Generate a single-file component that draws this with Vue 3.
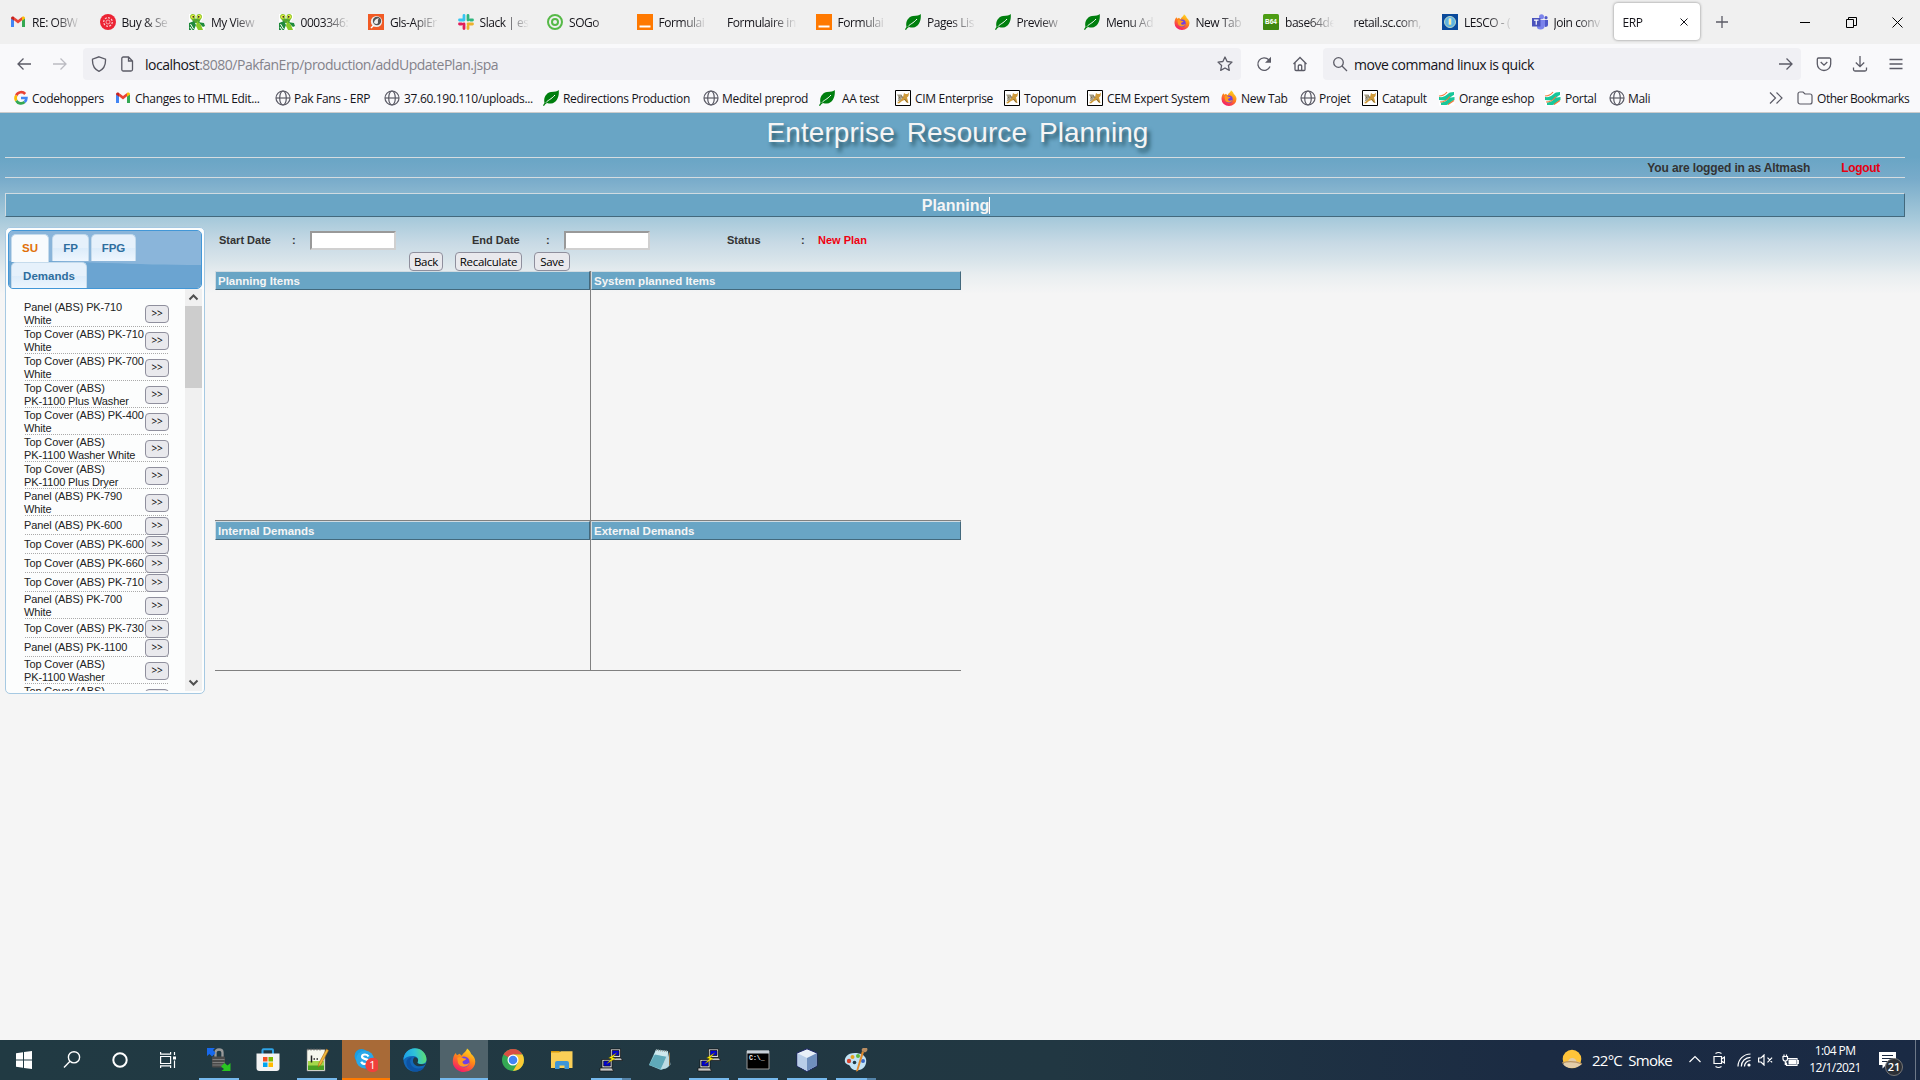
<template>
  <div class="screen">
    <!-- browser tabs -->
    <div class="tabstrip">
      <div v-for="(t, i) in tabs" :key="i" class="tab" :class="{ active: t.active }">
        <svg v-if="t.icon" class="fav" viewBox="0 0 16 16" v-html="icons[t.icon]"></svg>
        <span class="tab-label">{{ t.text }}</span>
        <svg v-if="t.active" class="tab-close" viewBox="0 0 8 8"><path d="M.5 .5l7 7M7.5 .5l-7 7" stroke="#15141a" /></svg>
      </div>
      <svg class="plus" viewBox="0 0 12 12"><path d="M6 0v12M0 6h12" stroke="#5b5b66" stroke-width="1.3" /></svg>
      <div class="win-controls">
        <svg viewBox="0 0 11 11"><path d="M0 5.5h10" stroke="#000" /></svg>
        <svg viewBox="0 0 11 11"><path d="M.5 2.5h7v8h-7zM2.500 2.500v-2h8v8h-3" fill="none" stroke="#000" /></svg>
        <svg viewBox="0 0 11 11"><path d="M.5 .5l10 10M10.500 .5l-10 10" stroke="#000" /></svg>
      </div>
    </div>

    <!-- address bar -->
    <div class="navbar">
      <svg class="ni back" viewBox="0 0 16 16"><path d="M15 8H2M7.500 2.500L2 8l5.500 5.500" /></svg>
      <svg class="ni forward" viewBox="0 0 16 16"><path d="M1 8h13M8.500 2.500L14 8l-5.500 5.500" /></svg>
      <div class="urlbar">
        <svg class="ni" viewBox="0 0 16 16"><path d="M8 .8L14.500 3.200C14.800 8.500 13 13 8 15.300C3 13 1.200 8.500 1.500 3.200Z" /></svg>
        <svg class="ni page-ico" viewBox="0 0 16 16"><path d="M2.800 2.500a1.500 1.500 0 0 1 1.500-1.500H9.500L13.500 5v8.500a1.500 1.500 0 0 1-1.500 1.500H4.300a1.500 1.500 0 0 1-1.500-1.500ZM9.500 1v4h4" /></svg>
        <span class="url"><b>localhost</b>:8080/PakfanErp/production/addUpdatePlan.jspa</span>
        <svg class="ni star" viewBox="0 0 16 16"><path d="M8 1l2.100 4.500 4.900.6-3.600 3.400.9 4.900L8 12l-4.300 2.400.9-4.900L1 6.100l4.900-.6z" stroke-linejoin="round" /></svg>
      </div>
      <svg class="ni reload" viewBox="0 0 16 16"><path d="M14 10.500A6.300 6.300 0 1 1 12.800 3.800" /><path d="M15 .8v6H9z" fill="#5b5b66" stroke="none" /></svg>
      <svg class="ni home" viewBox="0 0 16 16"><path d="M1.500 8L8 1.500 14.500 8M3 6.700V13.500a1 1 0 0 0 1 1h8a1 1 0 0 0 1-1V6.700M6.300 14.500V10a1 1 0 0 1 1-1h1.400a1 1 0 0 1 1 1v4.500" /></svg>
      <div class="searchbar">
        <svg class="ni" viewBox="0 0 16 16"><circle cx="6.500" cy="6.500" r="4.800" /><path d="M10 10l5 5" /></svg>
        <span class="query">move command linux is quick</span>
        <svg class="ni go" viewBox="0 0 16 16"><path d="M1 8h13M8.500 2.500L14 8l-5.500 5.500" /></svg>
      </div>
      <svg class="ni pocket" viewBox="0 0 16 16"><path d="M2.500 2h11a1.200 1.200 0 0 1 1.200 1.200V8A6.700 6.500 0 0 1 1.300 8V3.200A1.200 1.200 0 0 1 2.500 2ZM4.700 6L8 9.200 11.300 6" /></svg>
      <svg class="ni download" viewBox="0 0 16 16"><path d="M8 0v10.500M3.800 6.500L8 10.700l4.200-4.200M1.500 11.500V13.500a1.500 1.500 0 0 0 1.500 1.500h10a1.500 1.500 0 0 0 1.500-1.500v-2" /></svg>
      <svg class="ni menu" viewBox="0 0 16 16"><path d="M1.500 3.500h13M1.500 8h13M1.500 12.500h13" /></svg>
    </div>

    <!-- bookmarks, each one is as wide as the distance to the next -->
    <div class="bookmarks">
      <div v-for="(b, i) in bookmarks" :key="i" class="bookmark" :style="{ width: b.w + 'px' }">
        <svg class="fav" viewBox="0 0 16 16" v-html="icons[b.icon]"></svg>
        <span :style="{ marginLeft: (b.gap || 4) + 'px' }">{{ b.text }}</span>
      </div>
      <svg class="more" viewBox="0 0 14 14"><path d="M1 1.500L6.500 7 1 12.500M7.500 1.500L13 7 7.500 12.500" fill="none" stroke="#5b5b66" stroke-width="1.200" /></svg>
      <svg class="fav folder" viewBox="0 0 16 16"><path d="M1 4a2 2 0 0 1 2-2h3l2 2h5a2 2 0 0 1 2 2v6a2 2 0 0 1-2 2H3a2 2 0 0 1-2-2Z" fill="none" stroke="#5b5b66" stroke-width="1.200" /></svg>
      <span class="other">Other Bookmarks</span>
    </div>

    <!-- ERP page -->
    <div class="page">
      <h1>Enterprise Resource Planning</h1>
      <div class="userbar">
        <span>You are logged in as Altmash</span>
        <a class="logout">Logout</a>
      </div>
      <div class="titlebar"><span>Planning</span></div>

      <div class="content">
        <div class="side">
          <div class="side-tabs">
            <svg class="gloss" viewBox="0 0 192 57" preserveAspectRatio="none">
              <rect width="192" height="57" fill="#6ba4d1" />
              <path d="M0 0H192V34C120 34 80 30 0 30Z" fill="#8ab5da" />
            </svg>
            <a v-for="t in sideTabs" :key="t.text" class="side-tab" :class="{ on: t.on }" :style="{ width: t.w + 'px' }">{{ t.text }}</a>
          </div>
          <div class="side-body">
            <div class="items">
              <div v-for="(item, i) in items" :key="i" class="item" :class="{ tall: item.length > 1 }">
                <div class="item-name">
                  <div v-for="line in item" :key="line">{{ line }}</div>
                </div>
                <button class="btn">&gt;&gt;</button>
              </div>
            </div>
            <div class="scrollbar">
              <svg viewBox="0 0 17 17"><path d="M4.500 10.500l4-4 4 4" /></svg>
              <div class="thumb"></div>
              <svg class="down" viewBox="0 0 17 17"><path d="M4.500 6.500l4 4 4-4" /></svg>
            </div>
          </div>
        </div>

        <div class="plan">
          <div class="form-row">
            <label>Start Date</label><i>:</i><input type="text" />
            <label class="end">End Date</label><i>:</i><input type="text" />
            <label class="status">Status</label><i>:</i><em>New Plan</em>
          </div>
          <div class="buttons">
            <button class="btn back-btn">Back</button>
            <button class="btn recalc-btn">Recalculate</button>
            <button class="btn save-btn">Save</button>
          </div>
          <div class="grid top">
            <div class="cell"><div class="head">Planning Items</div></div>
            <div class="cell"><div class="head">System planned Items</div></div>
          </div>
          <div class="grid bottom">
            <div class="cell"><div class="head">Internal Demands</div></div>
            <div class="cell"><div class="head">External Demands</div></div>
          </div>
        </div>
      </div>
    </div>

    <!-- windows taskbar -->
    <div class="taskbar">
      <div v-for="(a, i) in apps" :key="i" class="app" :class="[a.state, { open: a.open, multi: a.multi }]" :style="{ width: (a.w || 49) + 'px' }">
        <svg viewBox="0 0 24 24" v-html="icons[a.icon]"></svg>
      </div>
      <div class="tray">
        <svg class="weather" viewBox="0 0 22 22">
          <circle cx="11" cy="10" r="9.300" fill="#ffc43a" />
          <path d="M2 15q2-3 5-2.500 1-4 5-3.500 3 .5 3.500 3.500 4 0 5 3-4 3.500-10 3.500T2 15Z" fill="#e3cda9" />
          <path d="M1 14q10-3 20 1" stroke="#b89464" fill="none" />
        </svg>
        <span class="temp">22°C&nbsp; Smoke</span>
        <svg class="t-chev" viewBox="0 0 14 8"><path d="M1.500 7L7 1.500 12.500 7" /></svg>
        <svg class="t-cam" viewBox="0 0 12 18"><path d="M1 5.500h7.500v7H1zM8.500 8l3-2v6l-3-2M2.500 2.500q3-2 6 0M2.500 15.500q3 2 6 0" /></svg>
        <svg class="t-wifi" viewBox="0 0 14 14"><path d="M1 13.500A12.500 12.500 0 0 1 13.500 1M4.300 13.500A9.200 9.200 0 0 1 13.500 4.300M7.500 13.500a6 6 0 0 1 6-6" /><circle cx="12" cy="12" r="1.600" fill="#fff" stroke="none" /></svg>
        <svg class="t-vol" viewBox="0 0 15 12"><path d="M.6 4h2.400l3-3v10l-3-3H.6zM9.500 3.700l4.600 4.600M14.100 3.700L9.500 8.300" /></svg>
        <svg class="t-bat" viewBox="0 0 17 13"><path d="M5.500 4.500h9.500v7H4.500V8.500M15 6.500h1.300v3H15M1 2.500h4.500v2.500q0 2-2.200 2T1 5zM2 2.500V.5M4.500 2.500V.5M3.300 7v3.500h2" /><path d="M6.500 5.500h7.500v5h-7.500z" fill="#fff" stroke="none" /></svg>
        <div class="clock"><div>1:04 PM</div><div>12/1/2021</div></div>
        <div class="notif">
          <svg viewBox="0 0 17 17"><path d="M0 0h17v13h-10l-3.500 3.500V13H0z" fill="#fff" /><path d="M3 3.500h11M3 6.500h11M3 9.500h7" stroke="#1b2a42" /></svg>
          <span class="badge">21</span>
        </div>
        <div class="peek"></div>
      </div>
    </div>
  </div>
</template>

<script setup>
const tabs = [
  { icon: 'gmail', text: 'RE: OBW' },
  { icon: 'redDot', text: 'Buy & Se' },
  { icon: 'mantis', text: 'My View' },
  { icon: 'mantis', text: '0003346:' },
  { icon: 'gls', text: 'Gls-ApiEr' },
  { icon: 'slack', text: 'Slack | es' },
  { icon: 'sogo', text: 'SOGo' },
  { icon: 'orange', text: 'Formulai' },
  { text: 'Formulaire in' },
  { icon: 'orange', text: 'Formulai' },
  { icon: 'leaf', text: 'Pages Lis' },
  { icon: 'leaf', text: 'Preview' },
  { icon: 'leaf', text: 'Menu Ad' },
  { icon: 'firefox', text: 'New Tab' },
  { icon: 'b64', text: 'base64de' },
  { text: 'retail.sc.com,' },
  { icon: 'lesco', text: 'LESCO - (' },
  { icon: 'teams', text: 'Join conv' },
  { text: 'ERP', active: true },
]

const bookmarks = [
  { icon: 'google', text: 'Codehoppers', w: 102, gap: 3 },
  { icon: 'gmail', text: 'Changes to HTML Edit...', w: 160 },
  { icon: 'globe', text: 'Pak Fans - ERP', w: 109, gap: 3 },
  { icon: 'globe', text: '37.60.190.110/uploads...', w: 159 },
  { icon: 'leaf', text: 'Redirections Production', w: 160 },
  { icon: 'globe', text: 'Meditel preprod', w: 116, gap: 3 },
  { icon: 'leaf', text: 'AA test', w: 76, gap: 7 },
  { icon: 'tomcat', text: 'CIM Enterprise', w: 109 },
  { icon: 'tomcat', text: 'Toponum', w: 83 },
  { icon: 'tomcat', text: 'CEM Expert System', w: 134 },
  { icon: 'firefox', text: 'New Tab', w: 79 },
  { icon: 'globe', text: 'Projet', w: 62, gap: 3 },
  { icon: 'tomcat', text: 'Catapult', w: 77 },
  { icon: 'eshop', text: 'Orange eshop', w: 106 },
  { icon: 'eshop', text: 'Portal', w: 64 },
  { icon: 'globe', text: 'Mali', w: 160, gap: 3 },
]

const sideTabs = [
  { text: 'SU', w: 38, on: true },
  { text: 'FP', w: 37 },
  { text: 'FPG', w: 45 },
  { text: 'Demands', w: 76 },
]

const items = [
  ['Panel (ABS) PK-710', 'White'],
  ['Top Cover (ABS) PK-710', 'White'],
  ['Top Cover (ABS) PK-700', 'White'],
  ['Top Cover (ABS)', 'PK-1100 Plus Washer'],
  ['Top Cover (ABS) PK-400', 'White'],
  ['Top Cover (ABS)', 'PK-1100 Washer White'],
  ['Top Cover (ABS)', 'PK-1100 Plus Dryer'],
  ['Panel (ABS) PK-790', 'White'],
  ['Panel (ABS) PK-600'],
  ['Top Cover (ABS) PK-600'],
  ['Top Cover (ABS) PK-660'],
  ['Top Cover (ABS) PK-710'],
  ['Panel (ABS) PK-700', 'White'],
  ['Top Cover (ABS) PK-730'],
  ['Panel (ABS) PK-1100'],
  ['Top Cover (ABS)', 'PK-1100 Washer'],
  ['Top Cover (ABS)', 'PK-1100 Dryer'],
]

const apps = [
  { icon: 'windows', w: 48 },
  { icon: 'search', w: 48 },
  { icon: 'cortana', w: 48 },
  { icon: 'taskview', w: 50 },
  { icon: 'lock', open: true, w: 49 },
  { icon: 'store' },
  { icon: 'npp', open: true, w: 50 },
  { icon: 'skype', state: 'alert', w: 48 },
  { icon: 'edge', w: 50 },
  { icon: 'firefoxBig', state: 'current', w: 48 },
  { icon: 'chrome' },
  { icon: 'explorer' },
  { icon: 'putty', open: true, multi: true },
  { icon: 'notepad' },
  { icon: 'putty', open: true },
  { icon: 'cmd', open: true },
  { icon: 'cube', open: true },
  { icon: 'paint', open: true, multi: true },
]

const fox = `
  <defs><linearGradient id="fx" x1=".8" y1="0" x2=".3" y2="1"><stop offset="0" stop-color="#ffe226"/><stop offset=".45" stop-color="#ff8a16"/><stop offset="1" stop-color="#f5156c"/></linearGradient></defs>
  <path d="M10 .3C11.500 1.500 12.500 2.800 12.800 4c1.500 1 2.700 3 2.700 5a7.500 7 0 0 1-15 0C.5 6.500 1.300 4.500 2.500 3.300L3.300 4.800 5 3.800l1.500 1.400C7.500 3 9.500 2.500 10 .3Z" fill="url(#fx)"/>
  <circle cx="8" cy="9.300" r="3.700" fill="#7340e0"/>
  <path d="M3.500 6.500c1.500-.8 3-.6 4 .3l2 .4c-.3 1.200-2.300 1-2.500 2.300.2 1.500 2.500 2 4.500.3C11 13 5 13.500 4 10Z" fill="#ff9a1e"/>`

const icons = {
  gmail: `<path d="M1 13V4l3 2.300V13z" fill="#4285f4"/><path d="M12 13V6.300L15 4v9z" fill="#34a853"/><path d="M4 6.300V3L8 6l4-3v3.300L8 9.500z" fill="#ea4335"/><path d="M1 4.500C1 2.500 3 2.200 4 3v3.800L1 4.500z" fill="#c5221f"/><path d="M15 4.500C15 2.500 13 2.200 12 3v3.800l3-2.300z" fill="#fbbc04"/>`,
  redDot: `<circle cx="8" cy="8" r="8" fill="#ec2434"/><circle cx="8" cy="8" r="4.300" fill="none" stroke="#fff" stroke-opacity=".75" stroke-width="1.200" stroke-dasharray="2 1.300"/><circle cx="8" cy="8" r="2" fill="none" stroke="#fff" stroke-opacity=".7" stroke-width=".8"/>`,
  mantis: `<path d="M0 0h5l1 1h3l1-1h4v4l-2 3 4 3v6H0z" fill="#fff"/><path d="M2 4.500h10L10 9H5z" fill="#55a630"/><path d="M0 9l5-2 2 4-2 5H0zM9 8l6 1 1 3-2 1z" fill="#1e8a3c"/><path d="M8 7l4 4 2 5H9l-2-4z" fill="#8ac926"/><path d="M1.500 10l3 5M1 13l2 3" stroke="#fff"/><circle cx="3.800" cy="2.800" r="2.700" fill="#8ac926"/><circle cx="10.200" cy="2.800" r="2.700" fill="#8ac926"/><circle cx="3.800" cy="2.800" r="1.800" fill="#f7e94d"/><circle cx="10.200" cy="2.800" r="1.800" fill="#f7e94d"/><circle cx="4.300" cy="2.800" r=".9" fill="#222"/><circle cx="9.700" cy="2.800" r=".9" fill="#222"/>`,
  gls: `<path d="M0 0h16v16H0z" fill="#f15a24"/><circle cx="8.500" cy="7.500" r="5.600" fill="#eee"/><circle cx="9" cy="7" r="4.200" fill="#555"/><path d="M6 9q0-4 5-5-2 2-1 5-1 2-4 0z" fill="#eee"/><path d="M3 14l3-3" stroke="#fff" stroke-width="1.500"/>`,
  slack: `<g stroke-width="2.800" stroke-linecap="round"><path d="M6 1.500V6M1.500 6H6" stroke="#36c5f0"/><path d="M10 1.500V6M14.500 6H12.500" stroke="#2eb67d"/><path d="M1.500 10H3.500M6 10v4.500" stroke="#e01e5a"/><path d="M10 10h4.500M10 12.500v2" stroke="#ecb22e"/></g>`,
  sogo: `<circle cx="8" cy="8" r="7" fill="none" stroke="#56b947" stroke-width="2"/><circle cx="8" cy="8" r="3" fill="none" stroke="#56b947" stroke-width="2"/>`,
  orange: `<path d="M0 0h16v16H0z" fill="#ff7900"/><path d="M2.500 11.500h11v2h-11z" fill="#fff"/>`,
  leaf: `<path d="M1.500 13C0 7 4 2.500 8 2 12 1.500 14 1.500 15.700 0 16.500 6 14 13 8 13.500q-2.500 0-4-.5Q2 14 1 16L0 15.500Q.5 14 1.500 13Z" fill="#007f0e"/><path d="M3 12.500C5 10 8 9.500 12 5" stroke="#fff" fill="none" stroke-width="1"/>`,
  firefox: fox,
  firefoxBig: `<g transform="scale(1.5)">${fox}</g>`,
  b64: `<rect width="16" height="16" rx="1.500" fill="#4d9d14"/><path d="M0 9h16v5.500a1.500 1.500 0 0 1-1.500 1.500h-13A1.500 1.500 0 0 1 0 14.500z" fill="#3f870e"/><text x="8" y="10.200" text-anchor="middle" font-family="Liberation Sans" font-weight="bold" font-size="6.500" letter-spacing="0" fill="#fff">B64</text>`,
  lesco: `<path d="M0 0h16v16H0z" fill="#0a4a9c"/><circle cx="8" cy="8" r="5.500" fill="#5fb4e0"/><circle cx="8" cy="8" r="5.500" fill="none" stroke="#bcd8c8" stroke-width="1"/><path d="M8 4.500v6" stroke="#fff" stroke-width="2.500"/><path d="M8 5v6" stroke="#f5d94b" stroke-width="1"/>`,
  teams: `<circle cx="9.500" cy="2.800" r="2.500" fill="#7b83eb"/><circle cx="14" cy="3.700" r="1.600" fill="#5059c9"/><path d="M11 6h5v4.500q0 2.500-3 2.500z" fill="#5059c9"/><path d="M5 6h8v5q-.5 4.500-4.500 4.500T5 12z" fill="#7b83eb"/><path d="M0 4h8.500v8.500H0z" fill="#4b53bc"/><path d="M2 6.200h4.500M4.250 6.200v4.500" stroke="#fff" stroke-width="1.200"/>`,
  google: `<g fill="none" stroke-width="2.700"><path d="M12.200 4A5.400 5.400 0 0 0 3.300 5.300" stroke="#ea4335"/><path d="M3.300 5.300a5.400 5.400 0 0 0 0 5.400" stroke="#fbbc05"/><path d="M3.300 10.700A5.400 5.400 0 0 0 11.600 12" stroke="#34a853"/><path d="M11.600 12A5.400 5.400 0 0 0 13.400 8H8" stroke="#4285f4"/></g>`,
  globe: `<g fill="none" stroke="#5b5b66" stroke-width="1.200"><circle cx="8" cy="8" r="7"/><ellipse cx="8" cy="8" rx="3.300" ry="7"/><path d="M1 8h14"/></g>`,
  tomcat: `<path d="M.5 .5h15v15H.5z" fill="#fff" stroke="#000"/><path d="M8 7l1-4 1.500 1h2L14 2.500 13.500 6 12 7.500l1.500 5.500-2-.5L9.500 10 7 11l-3 2.500-2-.5 3-2.500z" fill="#cf9a3a"/><path d="M2 4.500h4.500l1 2.500-2 3.500-3 1L4 8z" fill="#a39c86"/><path d="M3 8.500l2-1.500M9.500 9l3 3.500M6.500 5.500L8 8" stroke="#5b5238" fill="none" stroke-width=".7"/>`,
  eshop: `<path d="M0 0h15.500v15.500H0z" fill="#fff"/><path d="M0 7c6 1 8-3 11-4.500l4-.5v3c-3 1-5 5-9 5.500L0 10zM2 12.500c5 0 7-4 10-5l3.500-.5v3c-3 1-4 4-8 5H2z" fill="#16c79a"/><path d="M0 6q5 0 8-4M1 12q6 0 10-5.500M9 14.500l6-4" stroke="#f47a3c" stroke-width="1.200" fill="none"/>`,
  windows: `<path d="M4 5.200L11 4.200V11.500H4zM12 4.100L20 3v8.500H12zM4 12.500H11V19.800L4 18.800zM12 12.500H20V21l-8-1.100z" fill="#fff"/>`,
  search: `<g fill="none" stroke="#fff" stroke-width="1.400"><circle cx="14" cy="9.300" r="5.600"/><path d="M10 13.300l-6 6.200"/></g>`,
  cortana: `<circle cx="12" cy="12" r="6.700" fill="none" stroke="#fff" stroke-width="2"/>`,
  taskview: `<g fill="none" stroke="#fff" stroke-width="1.200"><path d="M3.600 8.500h10v7h-10zM3.600 4v2.200h10V4M3.600 20v-2.200h10V20M17.500 4v3M17.500 12.500V20"/></g><path d="M16 8.500h3v3h-3z" fill="#fff"/>`,
  lock: `<path d="M8.500 9V4.500q0-3 3.500-3t3.500 3V9" fill="none" stroke="#9a9a9a" stroke-width="2.300"/><rect x="5" y="8.500" width="13" height="11" rx="1" fill="#4a4a4a"/><path d="M5.500 11.500h12M5.500 14.500h12M5.500 17h12" stroke="#7d7d7d"/><path d="M0 0h8L6 2l2.500 3L5 8.500 2.500 6 0 8z" fill="#1769ed"/><path d="M23.500 23h-9l2.500-2-3-2.500 3.500-3.500 3 2.500 3-2.500z" fill="#29c421"/>`,
  store: `<path d="M6.500 6V2.200q0-1 1-1h8.500q1 0 1 1V6" fill="none" stroke="#2fa4e7" stroke-width="2"/><path d="M.5 5.500h23V20q0 3-3 3h-17q-3 0-3-3z" fill="#f3f3f3"/><path d="M7 9h4.500v4.500H7z" fill="#f25022"/><path d="M12.500 9H17v4.500h-4.500z" fill="#7fba00"/><path d="M7 14.500h4.500V19H7z" fill="#00a4ef"/><path d="M12.500 14.500H17V19h-4.500z" fill="#ffb900"/>`,
  npp: `<path d="M2 1.500h18v21.500H2z" fill="#f6f8ee" stroke="#777" stroke-width=".6"/><path d="M3 13h16v9H3z" fill="#a5d84a"/><path d="M3 17.500h16v4.500H3z" fill="#4ba022"/><path d="M3 .5v2M6 .5v2M9 .5v2M12 .5v2M15 .5v2" stroke="#666"/><path d="M6.500 7.500v7M8.500 11h1.500M11.500 11h1.500" stroke="#222" stroke-width="1.500"/><path d="M21.500 1L14 15l-1 4 3-2.500L23.500 2.500z" fill="#f0b93d" stroke="#a46212" stroke-width=".6"/>`,
  skype: `<circle cx="7.500" cy="8" r="7" fill="#1b9de2"/><circle cx="15" cy="15" r="7" fill="#1686ca"/><circle cx="11" cy="11.500" r="9" fill="#28a8ea"/><path d="M14.500 8.500q-1-2-3.500-2-3 0-3 2.300c0 3 6.800 1.500 6.800 4.700q0 2.500-3.600 2.500-3 0-4-2.200" fill="none" stroke="#fff" stroke-width="2.200"/><circle cx="18.500" cy="17" r="7.200" fill="#f0403c"/><text x="18.500" y="21" text-anchor="middle" font-family="Open Sans" font-size="11" fill="#fff">1</text>`,
  edge: `<defs><linearGradient id="eg" x1="0" y1=".4" x2="1" y2=".3"><stop offset="0" stop-color="#1ca0e8"/><stop offset=".5" stop-color="#2fc3d8"/><stop offset="1" stop-color="#5fe06a"/></linearGradient></defs><circle cx="12" cy="12" r="11.500" fill="#1267b8"/><path d="M.5 12A11.500 11.500 0 0 1 23.500 11.500C23.500 16 18 17 15 15.500q-1.200-1 0-2.500c1-3-2-5-5.500-5Q3 8 .5 12Z" fill="url(#eg)"/><path d="M9 9.500q-3 2.500-1 7c2 4 7 5 12.500 3q.5 0 0 .8C16 26 5 24 3.500 16 3 12 5 9.500 9 9.500z" fill="#0d53a4"/><path d="M15 15.500q-1.300-1 0-2.500c.5-2-1-4-3.500-3.800-3 2.800-1.500 8 3.500 9 4 .6 7-1 8-2.700-1 .5-5 1.500-8 0z" fill="#203a44"/>`,
  chrome: `<circle cx="12" cy="12" r="11" fill="#34a853"/><path d="M12 12L2.500 6.500A11 11 0 0 1 21.500 6.500H12z" fill="#d94f43"/><path d="M12 6.500h9.500A11 11 0 0 1 12 23l5-8.500z" fill="#fcc934"/><circle cx="12" cy="12" r="5.500" fill="#fff"/><circle cx="12" cy="12" r="4.300" fill="#4285f4"/>`,
  explorer: `<path d="M1 3h8.500l1 2H1z" fill="#d99a0b"/><path d="M1 4.500h8l2-1.300H22.500V20H1z" fill="#fbcf57"/><path d="M5 21v-6q0-2 2-2h10q2 0 2 2v6h-4.500v-3.500h-5V21z" fill="#3f96d8"/>`,
  putty: `<g stroke="#111" stroke-width=".7"><path d="M11.500 1h10v8.500h-10z" fill="#d8d8d8"/><path d="M13.200 2.500h6.800v5h-6.800z" fill="#0000d8"/><path d="M12 10h10l1.500 2.500H12z" fill="#c8c8c8"/><path d="M3 11.500h10V20H3z" fill="#d8d8d8"/><path d="M4.700 13h6.600v5H4.700z" fill="#0000d8"/><path d="M1 20h12l1.500 3H1z" fill="#c8c8c8"/></g><path d="M18 4.500l-8.500 5.500 3 .8-5 5.200 9-5.500-3-1z" fill="#ffee00" stroke="#554d00" stroke-width=".4"/>`,
  notepad: `<path d="M8 1.500L20 3 20.500 19 13 22 1 17z" fill="#8fcbd6"/><path d="M8 2L20 3.500 20 9 6 7z" fill="#cfe9ee"/><path d="M1 17L7 6.500 19 9 12.500 21z" fill="#5fa9b9"/><path d="M8 2L20 3.500" stroke="#999" stroke-width="1.600" stroke-dasharray="1 1"/><path d="M20 4.500l2.500 12-4.500 4-5 .5z" fill="#bcdbe3"/><path d="M21.500 4.500v13" stroke="#8a6b42"/>`,
  cmd: `<path d="M1 3h22v18H1z" fill="#000" stroke="#999"/><path d="M1 2.500h22v3H1z" fill="#c8d0d8"/><text x="3" y="12" font-family="Liberation Mono" font-weight="bold" font-size="6.500" fill="#eee">C:\\_</text>`,
  cube: `<path d="M12 .8L22 5v13l-10 5.500L2 18V5z" fill="#e8eff8" stroke="#1b2466" stroke-width="1"/><path d="M12 10l9.500-4.700v12.500L12 23z" fill="#6f8fbd"/><path d="M2.500 5.300L12 10v13l-9.500-5z" fill="#b8cde8"/>`,
  paint: `<path d="M11 5C3 5 0 10 1 14c1 3 4 2 5 4 1 3 4 5 9 4 6-1 8-7 7-11S16 5 11 5Z" fill="#c2e3f5"/><circle cx="5" cy="13" r="2.200" fill="#d8432e"/><circle cx="8.500" cy="9" r="2" fill="#e6a01e"/><circle cx="14" cy="8" r="2" fill="#5db83c"/><circle cx="10.500" cy="14.500" r="1.800" fill="#1d3a47"/><circle cx="19" cy="13" r="2" fill="#3a68c4"/><path d="M20 4L14 23l-2 .5L18 3z" fill="#e08a2e"/><path d="M18 3q-1-2 1-3h4q1.500 3-2 4.500z" fill="#b98d62"/>`,
}
</script>

<style>
html, body { margin: 0; overflow: hidden; }
</style>

<style scoped>
* { box-sizing: border-box; }
svg { display: block; flex: none; }

.screen {
  width: 1920px;
  height: 1080px;
  display: flex;
  flex-direction: column;
  overflow: hidden;
  background: #f5f5f5;
  font-family: "Open Sans", "Noto Sans", sans-serif;
  color: #15141a;
}
.fav { width: 16px; height: 16px; flex: none; }

/* tabs */
.tabstrip {
  height: 44px;
  background: #f0f0f0;
  display: flex;
  align-items: center;
  padding-left: 1.5px;
  flex: none;
}
.tab {
  width: 89.5px;
  height: 37px;
  padding: 0 6px 0 9.5px;
  display: flex;
  align-items: center;
  flex: none;
  font-size: 12px;
  letter-spacing: -0.45px;
}
.tab .fav { margin: 0 6px 0 -1px; }
.tab-label {
  flex: 1;
  white-space: nowrap;
  line-height: 18px;
  padding-top: 2px;
  mask-image: linear-gradient(to right, #000 calc(100% - 30px), transparent calc(100% - 4px));
}
.tab.active {
  width: 86.5px;
  margin: 0 0 1px 1px;
  padding: 0 12px 0 9px;
  background: #fff;
  border-radius: 4px;
  box-shadow: 0 0 3px rgba(0, 0, 0, 0.45);
}
.tab-close { width: 8px; height: 8px; }
.plus { width: 12px; height: 12px; margin-left: 16px; }
.win-controls { display: flex; gap: 35px; margin-left: auto; margin-right: 17px; }
.win-controls svg { width: 11px; height: 11px; }

/* nav bar */
.navbar {
  height: 40px;
  background: #f9f9fb;
  display: flex;
  align-items: center;
  flex: none;
}
.ni {
  width: 16px;
  height: 16px;
  fill: none;
  stroke: #5b5b66;
  stroke-width: 1.3;
}
.back { margin-left: 16px; }
.forward { margin-left: 20px; stroke: #bcbcc2; }
.urlbar {
  width: 1158px;
  height: 32px;
  margin-left: 15px;
  padding: 0 8px;
  background: #f0f0f4;
  border-radius: 4px;
  display: flex;
  align-items: center;
}
.page-ico { margin-left: 12px; }
.url { margin-left: 10px; padding-top: 1px; font-size: 14px; letter-spacing: -0.5px; color: #84838b; white-space: nowrap; }
.url b { font-weight: normal; color: #15141a; }
.star { margin-left: auto; }
.reload { margin-left: 15px; }
.home { margin-left: 20px; }
.searchbar {
  width: 478px;
  height: 32px;
  margin-left: 15px;
  padding: 0 7px 0 9px;
  background: #f0f0f4;
  border-radius: 4px;
  display: flex;
  align-items: center;
}
.query { margin-left: 6px; padding-top: 1px; font-size: 14px; letter-spacing: -0.5px; white-space: nowrap; }
.go { margin-left: auto; }
.pocket { margin-left: 15px; }
.download { margin-left: 20px; }
.menu { margin-left: 20px; }

/* bookmarks */
.bookmarks {
  height: 29px;
  background: #f9f9fb;
  border-bottom: 1px solid #ccc;
  display: flex;
  align-items: center;
  padding-left: 13px;
  flex: none;
  font-size: 12px;
}
.bookmark { display: flex; align-items: center; flex: none; white-space: nowrap; letter-spacing: -0.32px; }
.other { letter-spacing: -0.45px; }
.more { width: 14px; height: 14px; }
.folder { margin-left: 14px; }
.other { margin-left: 4px; white-space: nowrap; }

/* page */
.page {
  flex: 1;
  padding: 0 15px 0 5px;
  font-family: "Liberation Sans", Arial, sans-serif;
  background: linear-gradient(#69a5c5 0, #69a5c5 44px, #78abca 66px, #8db9d1 84px, #a8cadb 107px, #c8dae5 130px, #d8e4ea 147px, #e9eef0 162px, #f5f5f5 181px) #f5f5f5;
}
h1 {
  margin: 0;
  height: 44px;
  padding-left: 5px;
  line-height: 39px;
  font-size: 28px;
  font-weight: normal;
  text-align: center;
  letter-spacing: 0.07px;
  word-spacing: 4px;
  color: #f5f5f5;
  text-shadow: 3px 4px 4px #24505f;
}
.userbar {
  height: 21px;
  border-top: 1px solid #d5dce0;
  border-bottom: 1px solid #d5dce0;
  display: flex;
  justify-content: flex-end;
  align-items: center;
  gap: 31px;
  padding-right: 25px;
  font-size: 12px;
  font-weight: bold;
  letter-spacing: -0.14px;
  color: #333;
}
.logout { color: #e80011; letter-spacing: -0.3px; }
.titlebar {
  height: 24px;
  margin-top: 15px;
  padding-left: 2px;
  border: 1px solid;
  border-color: #d0dbe1 #43697d #43697d #d0dbe1;
  background: #69a5c5;
  color: #f5f5f5;
  font-size: 16px;
  font-weight: bold;
  display: flex;
  align-items: center;
  justify-content: center;
}
.titlebar span { border-right: 1px solid #fff; line-height: 16px; padding-top: 1px; }
.content { display: flex; align-items: flex-start; }

/* left panel */
.side {
  width: 200px;
  height: 467px;
  margin-top: 10px;
  border: 1px solid #a6c9e2;
  border-radius: 5px;
  background: #fcfdfd;
  padding: 2px;
}
.side-tabs {
  position: relative;
  height: 59px;
  border: 1px solid #4297d7;
  border-radius: 5px;
  padding: 3px 0 0 2px;
  display: flex;
  flex-wrap: wrap;
  align-content: flex-start;
  gap: 0 2px;
  overflow: hidden;
}
.gloss { position: absolute; inset: 0; width: 100%; height: 100%; }
.side-tab {
  position: relative;
  height: 27px;
  border: 1px solid #c5dbec;
  border-bottom: 0;
  border-radius: 5px 5px 0 0;
  background: linear-gradient(#e6f1fb 50%, #dcecfa 50%, #eef6fe);
  color: #2e6e9e;
  font-size: 11.5px;
  font-weight: bold;
  line-height: 26px;
  text-align: center;
}
.side-tab.on { background: #f8fbfd; color: #e17009; height: 28px; margin-right: 1px; }
.side-body { height: 402px; display: flex; overflow: hidden; }
.items { width: 177px; padding: 11px 0 0 16px; }
.item {
  width: 145px;
  height: 19px;
  display: flex;
  align-items: center;
  justify-content: space-between;
  font-size: 11px;
  line-height: 13px;
  letter-spacing: -0.12px;
  color: #222;
  background: linear-gradient(to right, #aaa 50%, transparent 50%) 1px 100% / 2px 1px repeat-x;
}
.item.tall { height: 27px; }
.item-name { width: 121px; white-space: nowrap; }
.btn {
  margin: 0;
  padding: 0;
  border: 1px solid #8f8f9d;
  border-radius: 4px;
  background: #e9e9ed;
  color: #000;
  font-family: "Open Sans", sans-serif;
  font-size: 11.5px;
  line-height: 15px;
  letter-spacing: -0.3px;
}
.item .btn { width: 24px; height: 18px; font-size: 10px; flex: none; }
.scrollbar { width: 17px; background: #f0f0f0; display: flex; flex-direction: column; }
.scrollbar svg { width: 17px; height: 17px; fill: none; stroke: #505050; stroke-width: 2; }
.thumb { height: 82px; background: #cdcdcd; }
.scrollbar .down { margin-top: auto; }

/* plan area */
.plan { width: 746px; margin-left: 10px; padding-top: 12px; }
.form-row {
  height: 22px;
  display: flex;
  align-items: center;
  padding-left: 4px;
  font-size: 11px;
  font-weight: bold;
  color: #333;
}
.form-row label { width: 73px; }
.form-row .end { width: 74px; }
.form-row i { width: 18px; font-style: normal; }
.form-row input {
  width: 86px;
  height: 19px;
  margin: 0 76px 0 0;
  border: 2px solid;
  border-color: #999 #d0d0d0 #d0d0d0 #999;
  background: #fff;
}
.form-row em { font-style: normal; color: #f00010; }
.form-row .status { margin-left: 1px; width: 74px; }
.form-row .status + i { width: 17px; }
.buttons { height: 20px; padding: 1px 0 0 194px; display: flex; align-items: flex-start; gap: 12px; }
.buttons .btn { height: 19px; }
.back-btn { width: 34px; }
.recalc-btn { width: 67px; }
.save-btn { width: 36px; }
.grid { display: flex; border-bottom: 1px solid #808080; }
.grid.top { height: 250px; }
.grid.bottom { height: 150px; }
.cell { width: 370px; }
.cell:first-child { width: 376px; border-right: 1px solid #808080; }
.head {
  height: 19px;
  padding-left: 2px;
  border: 1px solid;
  border-color: #d0dbe1 #43697d #43697d #d0dbe1;
  background: #69a5c5;
  color: #f5f5f5;
  font-size: 11.5px;
  font-weight: bold;
  line-height: 18px;
}

/* taskbar */
.taskbar {
  height: 40px;
  flex: none;
  display: flex;
  background: linear-gradient(to right, #213a43, #213742 55%, #1b2b43 80%, #1a2a44);
  color: #fff;
}
.app { height: 40px; display: flex; align-items: center; justify-content: center; position: relative; flex: none; }
.app svg { width: 24px; height: 24px; }
.alert { background: #a86a37; border-bottom: 2px solid #ff7a00; padding-top: 2px; }
.current { background: #50636b; border-bottom: 2px solid #76b9ed; padding-top: 2px; }
.open::after {
  content: "";
  position: absolute;
  bottom: 0;
  left: 4.5px;
  width: 40px;
  height: 2px;
  background: #76b9ed;
}
.multi::after { background: linear-gradient(to right, #76b9ed 31px, #5483a8 31px); }
.tray { margin-left: auto; display: flex; align-items: center; }
.tray > svg { fill: none; stroke: #fff; stroke-width: 1.2; }
.tray .weather { width: 22px; height: 22px; stroke: none; }
.temp { width: 96px; margin-left: 9px; font-size: 15px; letter-spacing: -0.75px; white-space: nowrap; }
.tray .t-chev { width: 14px; height: 8px; margin-bottom: 2px; }
.t-cam { width: 12px; height: 18px; margin-left: 11px; }
.t-wifi { width: 14px; height: 14px; margin-left: 12px; }
.t-vol { width: 15px; height: 12px; margin-left: 7px; }
.t-bat { width: 17px; height: 13px; margin-left: 9px; }
.clock { width: 72px; text-align: center; font-size: 12px; line-height: 17px; letter-spacing: -0.6px; padding-bottom: 3px; }
.notif { position: relative; width: 17px; height: 17px; margin: 0 19px 0 8px; }
.notif svg { width: 17px; height: 17px; }
.badge {
  position: absolute;
  left: 6px;
  top: 6px;
  width: 18px;
  height: 18px;
  border-radius: 50%;
  border: 1px solid #777;
  background: #2b2f36;
  font-size: 11px;
  line-height: 15px;
  text-align: center;
  font-weight: 600;
}
.peek { width: 5px; height: 40px; border-left: 1px solid #6d7888; }
</style>
